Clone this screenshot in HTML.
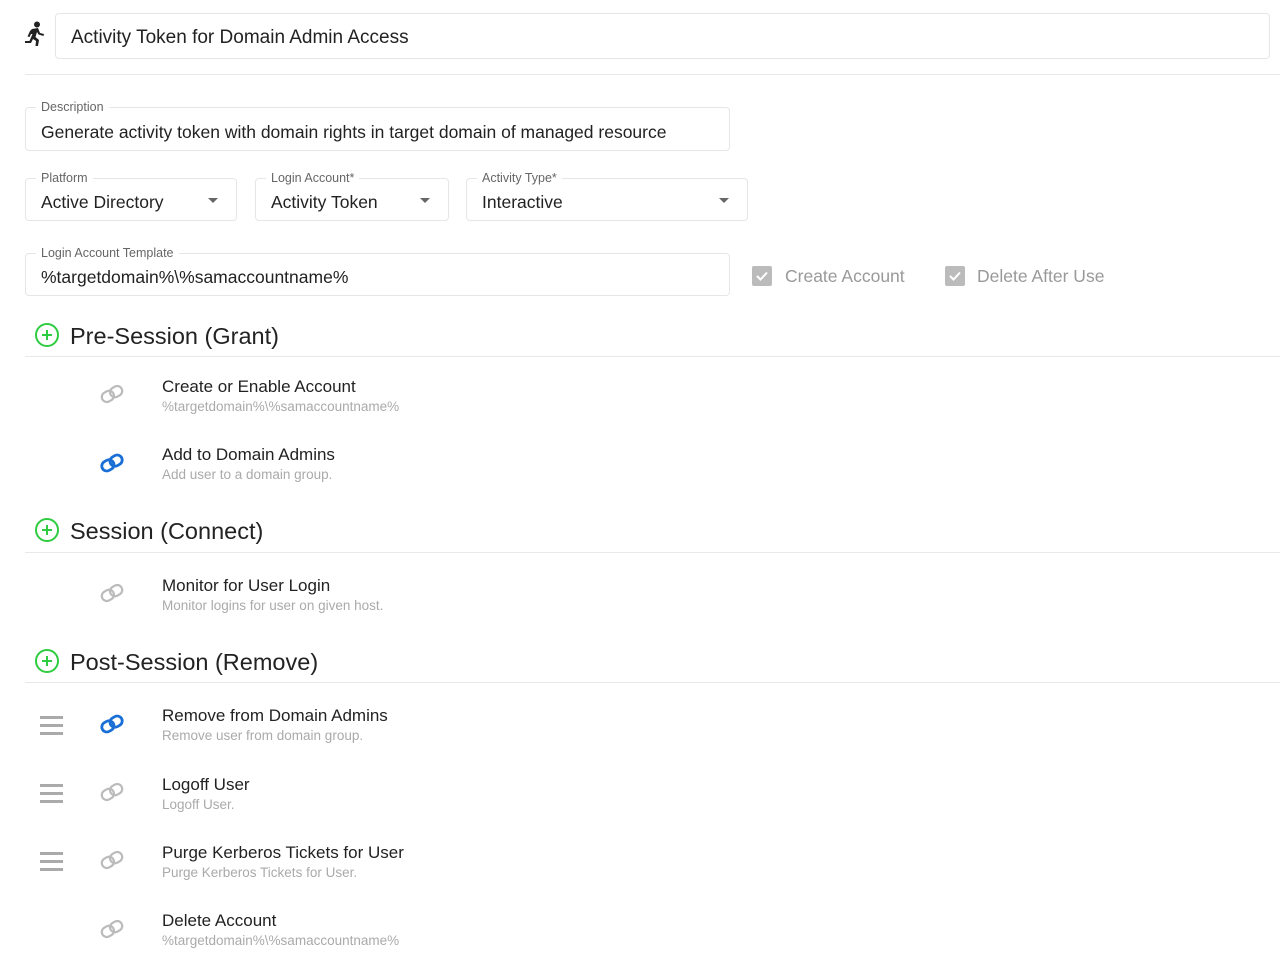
<!DOCTYPE html>
<html><head><meta charset="utf-8"><style>
body{margin:0;width:1280px;height:960px;background:#fff;font-family:"Liberation Sans",sans-serif;color:#222;position:relative;overflow:hidden}
.a{position:absolute}
.box{position:absolute;border:1px solid #e6e6e6;border-radius:4px;box-sizing:border-box}
.lbl{position:absolute;top:-8px;left:10px;background:#fff;padding:0 5px;font-size:12.5px;color:#666;line-height:14px}
.val{position:absolute;left:15px;font-size:17.5px;color:#222;white-space:nowrap}
.caret{position:absolute;width:0;height:0;border-left:5px solid transparent;border-right:5px solid transparent;border-top:5px solid #666;top:19px}
.hr{position:absolute;left:25px;right:0;height:1px;background:#e8e8e8}
.hd{position:absolute;left:70px;font-size:23.5px;color:#222;white-space:nowrap}
.plus{position:absolute;left:35px;width:24px;height:24px;border:2px solid #2ecc40;border-radius:50%;box-sizing:border-box}
.plus:before{content:"";position:absolute;left:5px;top:9px;width:10px;height:2px;background:#2ecc40}
.plus:after{content:"";position:absolute;left:9px;top:5px;width:2px;height:10px;background:#2ecc40}
.t{position:absolute;left:162px;font-size:17px;color:#222;white-space:nowrap}
.s{position:absolute;left:162px;font-size:13.5px;color:#aaa;white-space:nowrap}
.lk{position:absolute;left:99px;width:26px;height:26px}
.dr{position:absolute;left:40px;width:23px;height:19px}
.dr i{display:block;height:3px;background:#aaa;margin-bottom:5px}
.cb{position:absolute;width:20px;height:20px;background:#bbb;border-radius:2px}
.cbt{position:absolute;font-size:17.5px;color:#999;white-space:nowrap}
</style></head><body>
<svg class="a" style="left:24px;top:21px" width="22" height="26" viewBox="0 0 22 26"><circle cx="13" cy="3.5" r="3" fill="#222"/><path d="M8 8 L14 7 L16 12 L20 13 L19.5 15 L14.5 13.5 L13 11 L11.5 16 L15 19 L14 25 L11.5 25 L12 20 L9 18 L7 22 L1 22 L1 20 L5.5 20 L8.5 13 L7 13 L5.5 16 L3.5 15.5 L6 10 Z" fill="#222"/></svg>
<div class="box" style="left:55px;top:13px;width:1215px;height:46px"><div class="val" style="top:13px;font-size:19px">Activity Token for Domain Admin Access</div></div>
<div class="a" style="left:25px;right:0;top:74px;height:1px;background:#e8e8e8"></div>

<div class="box" style="left:25px;top:107px;width:705px;height:44px"><div class="lbl">Description</div><div class="val" style="top:14px">Generate activity token with domain rights in target domain of managed resource</div></div>

<div class="box" style="left:25px;top:178px;width:212px;height:43px"><div class="lbl">Platform</div><div class="val" style="top:13px">Active Directory</div><div class="caret" style="left:182px"></div></div>
<div class="box" style="left:255px;top:178px;width:194px;height:43px"><div class="lbl">Login Account*</div><div class="val" style="top:13px">Activity Token</div><div class="caret" style="left:164px"></div></div>
<div class="box" style="left:466px;top:178px;width:282px;height:43px"><div class="lbl">Activity Type*</div><div class="val" style="top:13px">Interactive</div><div class="caret" style="left:252px"></div></div>

<div class="box" style="left:25px;top:253px;width:705px;height:43px"><div class="lbl">Login Account Template</div><div class="val" style="top:13px">%targetdomain%\%samaccountname%</div></div>

<div class="cb" style="left:752px;top:266px"><svg width="20" height="20"><path d="M5 10 L8.5 13.5 L15 6.5" stroke="#fff" stroke-width="2" fill="none"/></svg></div>
<div class="cbt" style="left:785px;top:266px">Create Account</div>
<div class="cb" style="left:945px;top:266px"><svg width="20" height="20"><path d="M5 10 L8.5 13.5 L15 6.5" stroke="#fff" stroke-width="2" fill="none"/></svg></div>
<div class="cbt" style="left:977px;top:266px">Delete After Use</div>

<div class="plus" style="top:323px"></div><div class="hd" style="top:323px">Pre-Session (Grant)</div>
<div class="hr" style="top:356px"></div>

<svg class="lk" style="top:381px" viewBox="0 0 26 26"><g transform="rotate(-30 13 13)" fill="none" stroke="#bbb" stroke-width="2.2"><rect x="2" y="8" width="12.5" height="10" rx="5"/><rect x="11.5" y="8" width="12.5" height="10" rx="5"/></g></svg>
<div class="t" style="top:377px">Create or Enable Account</div><div class="s" style="top:399px">%targetdomain%\%samaccountname%</div>

<svg class="lk" style="top:450px" viewBox="0 0 26 26"><g transform="rotate(-30 13 13)" fill="none" stroke="#1a6fd6" stroke-width="2.8"><rect x="2" y="8" width="12.5" height="10" rx="5"/><rect x="11.5" y="8" width="12.5" height="10" rx="5"/></g></svg>
<div class="t" style="top:445px">Add to Domain Admins</div><div class="s" style="top:467px">Add user to a domain group.</div>

<div class="plus" style="top:518px"></div><div class="hd" style="top:518px">Session (Connect)</div>
<div class="hr" style="top:552px"></div>

<svg class="lk" style="top:580px" viewBox="0 0 26 26"><g transform="rotate(-30 13 13)" fill="none" stroke="#bbb" stroke-width="2.2"><rect x="2" y="8" width="12.5" height="10" rx="5"/><rect x="11.5" y="8" width="12.5" height="10" rx="5"/></g></svg>
<div class="t" style="top:576px">Monitor for User Login</div><div class="s" style="top:598px">Monitor logins for user on given host.</div>

<div class="plus" style="top:649px"></div><div class="hd" style="top:649px">Post-Session (Remove)</div>
<div class="hr" style="top:682px"></div>

<div class="dr" style="top:716px"><i></i><i></i><i></i></div>
<svg class="lk" style="top:711px" viewBox="0 0 26 26"><g transform="rotate(-30 13 13)" fill="none" stroke="#1a6fd6" stroke-width="2.8"><rect x="2" y="8" width="12.5" height="10" rx="5"/><rect x="11.5" y="8" width="12.5" height="10" rx="5"/></g></svg>
<div class="t" style="top:706px">Remove from Domain Admins</div><div class="s" style="top:728px">Remove user from domain group.</div>

<div class="dr" style="top:784px"><i></i><i></i><i></i></div>
<svg class="lk" style="top:779px" viewBox="0 0 26 26"><g transform="rotate(-30 13 13)" fill="none" stroke="#bbb" stroke-width="2.2"><rect x="2" y="8" width="12.5" height="10" rx="5"/><rect x="11.5" y="8" width="12.5" height="10" rx="5"/></g></svg>
<div class="t" style="top:775px">Logoff User</div><div class="s" style="top:797px">Logoff User.</div>

<div class="dr" style="top:852px"><i></i><i></i><i></i></div>
<svg class="lk" style="top:847px" viewBox="0 0 26 26"><g transform="rotate(-30 13 13)" fill="none" stroke="#bbb" stroke-width="2.2"><rect x="2" y="8" width="12.5" height="10" rx="5"/><rect x="11.5" y="8" width="12.5" height="10" rx="5"/></g></svg>
<div class="t" style="top:843px">Purge Kerberos Tickets for User</div><div class="s" style="top:865px">Purge Kerberos Tickets for User.</div>

<svg class="lk" style="top:916px" viewBox="0 0 26 26"><g transform="rotate(-30 13 13)" fill="none" stroke="#bbb" stroke-width="2.2"><rect x="2" y="8" width="12.5" height="10" rx="5"/><rect x="11.5" y="8" width="12.5" height="10" rx="5"/></g></svg>
<div class="t" style="top:911px">Delete Account</div><div class="s" style="top:933px">%targetdomain%\%samaccountname%</div>
</body></html>
